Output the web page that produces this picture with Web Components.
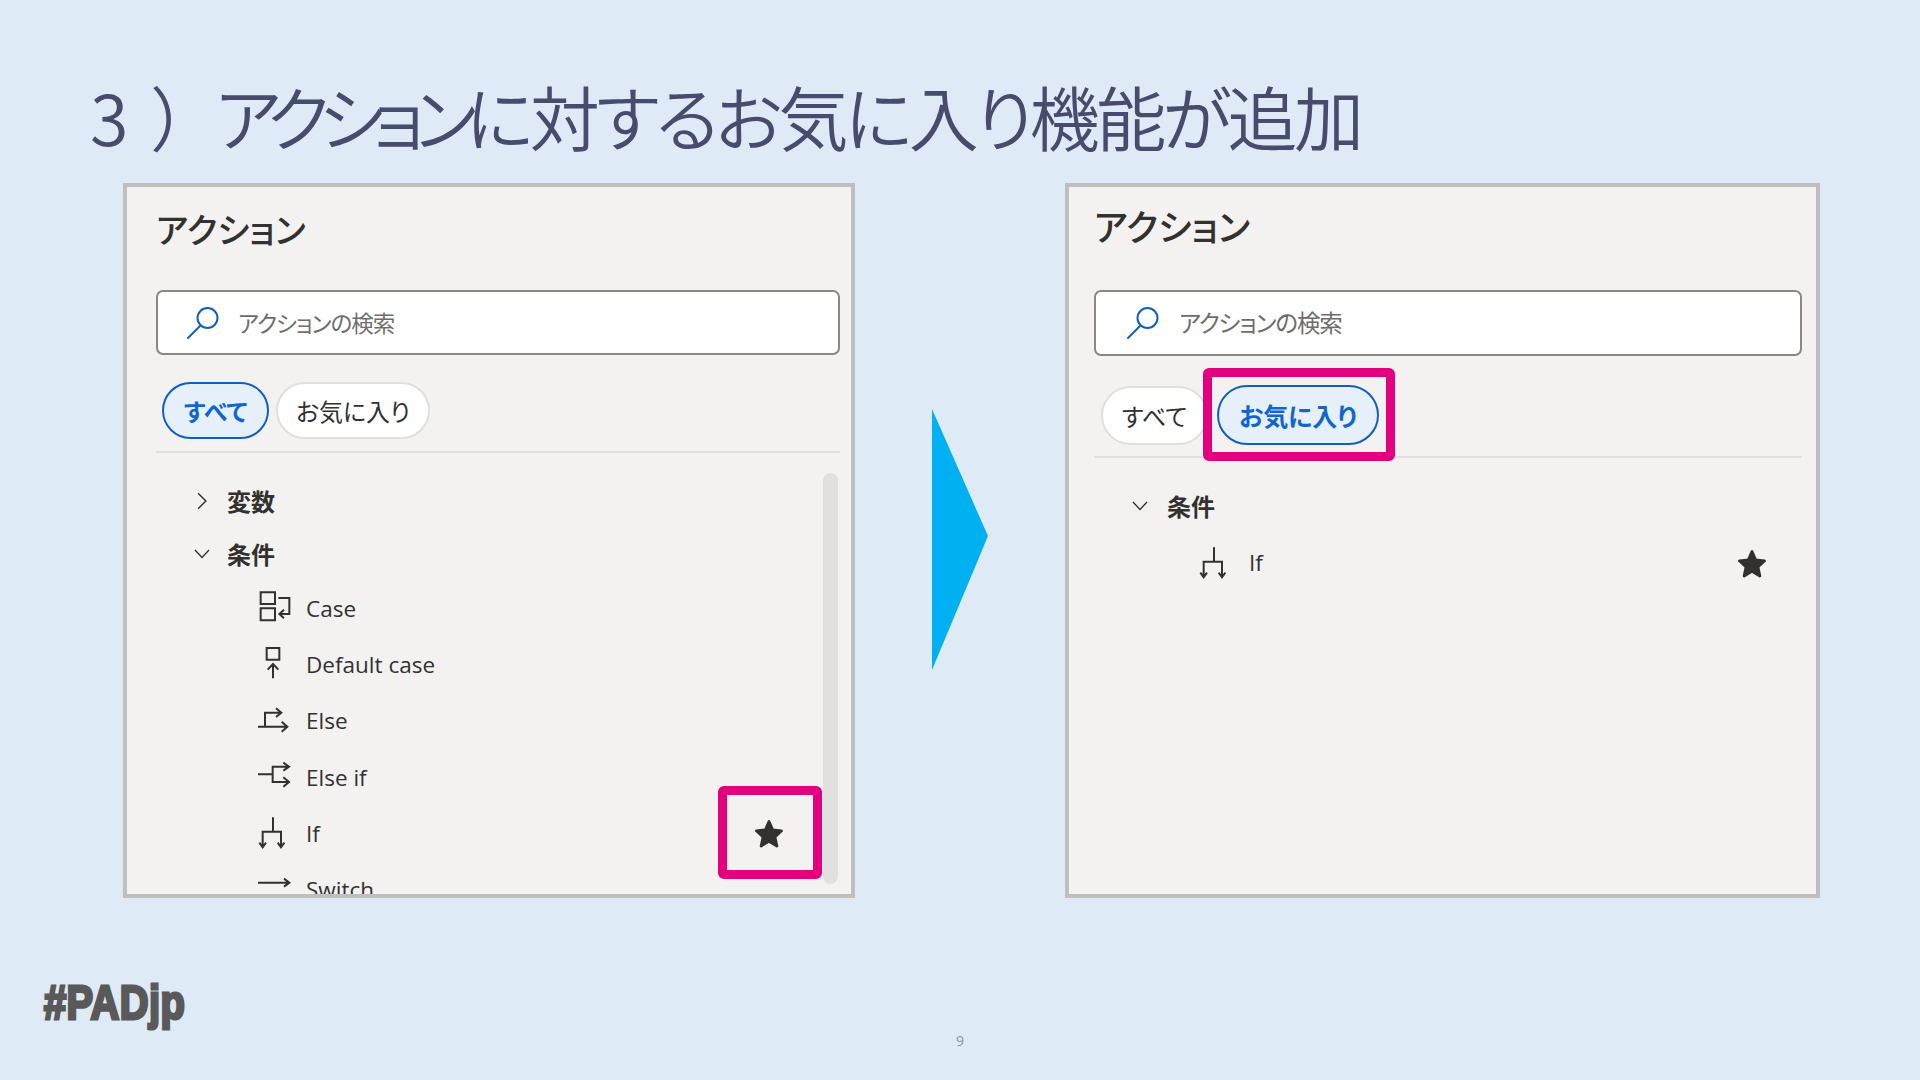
<!DOCTYPE html>
<html lang="ja"><head><meta charset="utf-8"><title>slide</title>
<style>
html,body{margin:0;padding:0;width:1920px;height:1080px;overflow:hidden;background:#deeaf6}
body{font-family:"Noto Sans CJK JP","Noto Sans",sans-serif;font-feature-settings:"palt";color:#323130}
</style></head><body>
<x-slide>
  <x-title slot="title"><span style="letter-spacing:24px">3</span><span style="letter-spacing:28px">）</span><span style="letter-spacing:-10.6px">アクション</span><span style="letter-spacing:-3.6px">に対するお気に入り機能が追加</span></x-title>
  <x-panel slot="left" style="width:732px;--pl:29px;--pr:11px;--title-size:34.5px;--title-top:19px;--search-h:65px;--pills-top:27px;--pills-pl:6px;--pills-gap:7px;--rule-top:12px;--star-scale:1.14">
    <span slot="title">アクション</span>
    <x-search slot="search" style="--icon-left:28px;--ph-left:18px;--ph-size:22.5px;--ph-ls:-1px">アクションの検索</x-search>
    <x-pill slot="pills" selected style="width:107px;height:57px">すべて</x-pill>
    <x-pill slot="pills" style="width:154px;height:57px">お気に入り</x-pill>
    <x-group name="変数"></x-group>
    <x-group name="条件" open>
      <x-item icon="case">Case</x-item>
      <x-item icon="default">Default case</x-item>
      <x-item icon="else">Else</x-item>
      <x-item icon="elseif">Else if</x-item>
      <x-item icon="if" style="--star-right:51px"><x-star slot="end"></x-star>If</x-item>
      <x-item icon="switch">Switch</x-item>
    </x-group>
    <x-scrollbar slot="over" style="left:696px;top:286px;width:15px;height:411px"></x-scrollbar>
    <x-highlight slot="over" style="left:591px;top:599px;width:104px;height:93px"></x-highlight>
  </x-panel>
  <x-arrow slot="arrow"></x-arrow>
  <x-panel slot="right" style="width:755px;--pl:25px;--pr:14px;--title-size:36px;--title-top:16px;--search-h:66px;--pills-top:29px;--pills-pl:7px;--pills-gap:10px;--rule-top:11px;--indent:3px;--label-shift:2px;--star-scale:1.14">
    <span slot="title">アクション</span>
    <x-search slot="search" style="--icon-left:30px;--ph-left:19px;--ph-size:23.5px;--ph-ls:-1.1px">アクションの検索</x-search>
    <x-pill slot="pills" style="width:107px;height:59px;margin-top:1px">すべて</x-pill>
    <x-pill slot="pills" selected style="width:162px;height:60px;font-size:25px;margin-left:-1px">お気に入り</x-pill>
    <x-group name="条件" open>
      <x-item icon="if" style="--star-right:30px;--pad-top:5px"><x-star slot="end"></x-star>If</x-item>
    </x-group>
    <x-highlight slot="over" style="left:134px;top:181px;width:192px;height:93px"></x-highlight>
  </x-panel>
  <x-tag slot="tag">#PADjp</x-tag>
  <span slot="page">9</span>
</x-slide>
<script>
function def(name,css,html){
  customElements.define(name,class extends HTMLElement{
    constructor(){super();this.attachShadow({mode:'open'}).innerHTML='<style>'+css+'</style>'+(typeof html==='function'?'':html)}
    connectedCallback(){if(typeof html==='function'&&!this._d){this._d=1;this.shadowRoot.innerHTML+=html(this)}}
  });
}
def('x-slide',`
:host{display:block;width:1920px;height:1080px;box-sizing:border-box;padding-top:76px}
.t{padding-left:90px;height:80px;margin-bottom:27px}
.row{display:flex;align-items:stretch;height:715px;padding-left:123px}
.arrow{display:flex;align-items:center;width:210px;justify-content:center}
.foot{display:grid;grid-template-columns:1fr auto 1fr;height:182px}
.tag{padding:81px 0 0 44px;overflow:visible}
.page{align-self:start;padding-top:135px;font:14px/16px "Noto Sans",sans-serif;color:#8f9aa8}
`,`<div class="t"><slot name="title"></slot></div>
<div class="row"><slot name="left"></slot><div class="arrow"><slot name="arrow"></slot></div><slot name="right"></slot></div>
<div class="foot"><div class="tag"><slot name="tag"></slot></div><div class="page"><slot name="page"></slot></div><div></div></div>`);
def('x-title',`:host{display:block;font:350 70px/80px "Noto Sans CJK JP",sans-serif;font-feature-settings:"palt";color:#474c6c;white-space:nowrap}`,`<slot></slot>`);
def('x-arrow',`:host{display:block;width:56px;height:261px;margin-top:-3px}svg{display:block}`,`<svg width="56" height="261" viewBox="0 0 56 261"><path d="M0 0L56 127L0 261Z" fill="#00b0f0"/></svg>`);
def('x-panel',`
:host{display:block;position:relative;box-sizing:border-box;height:715px;background:#f3f2f1;border:4px solid #bfbfbf;overflow:hidden;padding:var(--title-top,20px) var(--pr,11px) 0 var(--pl,29px);flex:none}
.title{font:500 var(--title-size,35px)/44px "Noto Sans CJK JP",sans-serif;font-feature-settings:"palt";color:#323130;height:44px;margin-bottom:calc(59px - var(--title-top,20px))}
.pills{display:flex;gap:var(--pills-gap,8px);padding-left:var(--pills-pl,6px);margin-top:var(--pills-top,28px);align-items:flex-start}
.rule{height:2px;background:#e1dfdd;margin-top:var(--rule-top,13px);margin-bottom:21px}
`,`<div class="title"><slot name="title"></slot></div><slot name="search"></slot>
<div class="pills"><slot name="pills"></slot></div><div class="rule"></div><slot></slot><slot name="over"></slot>`);
def('x-search',`
:host{display:flex;align-items:center;box-sizing:border-box;height:var(--search-h,64px);background:#fff;border:2px solid #8a8886;border-radius:7px;padding-left:var(--icon-left,28px);color:#6f6d6b;font:400 var(--ph-size,22.5px)/1 "Noto Sans CJK JP",sans-serif;font-feature-settings:"palt";letter-spacing:var(--ph-ls,-.5px)}
svg{flex:none;margin-right:var(--ph-left,20px)}`,
`<svg width="34" height="36" viewBox="0 0 34 36" fill="none" stroke="#1160c0" stroke-width="2" stroke-linecap="round"><circle cx="21.5" cy="13" r="10"/><path d="M14 21L2 33"/></svg><slot></slot>`);
def('x-pill',`
:host{display:flex;align-items:center;justify-content:center;box-sizing:border-box;border-radius:31px;background:#fff;border:2px solid #e1dfdd;color:#323130;font:400 24px/1 "Noto Sans CJK JP",sans-serif;font-feature-settings:"palt";flex:none}
:host([selected]){background:#e6f0fa;border-color:#0f5fc2;color:#1066cc;font-weight:700}`,`<slot></slot>`);
const chev={open:'M1 1L8 8.5L15 1',closed:'M1 1L8 8L1 15'};
def('x-group',`
:host{display:block}
:host([open]) .h{margin-bottom:1px}
.h{display:flex;align-items:center;height:53px;padding-left:36px;font:700 24px/1 "Noto Sans CJK JP",sans-serif;color:#323130}
.c{width:20px;height:18px;display:flex;align-items:center;justify-content:center;margin-right:calc(15px + var(--label-shift,0px))}
svg{display:block}`,
h=>{const o=h.hasAttribute('open');return `<div class="h"><div class="c">${o?
`<svg width="18" height="10" viewBox="0 0 16 10" fill="none" stroke="#323130" stroke-width="1.3"><path d="${chev.open}"/></svg>`:
`<svg width="10" height="18" viewBox="0 0 9 16" fill="none" stroke="#323130" stroke-width="1.3"><path d="${chev.closed}"/></svg>`}</div><span>${h.getAttribute('name')}</span></div><slot></slot>`});
const ic={
case:[30,'M92 40h43v35h-43zM92 88h43v36h-43zM145 57H178V105H150M162 92L148 105L162 118'],
default:[198,'M110 207h38v35h-38zM129 298V255M113 272L129 255L145 272'],
else:[366,'M84 440H170M155 425L172 440L155 455M105 440V398H152M138 385L154 398L138 411'],
elseif:[534,'M84 583H128M175 560H128V606H175M160 548L177 560L160 572M160 592L177 606L160 620'],
if:[702,'M129 712V755M98 800V755H153V800M88 788L98 802L108 788M143 788L153 802L163 788'],
switch:[870,'M84 905H176M162 893L178 905L162 917M84 958H176M100 943L84 958L100 973']
};
def('x-item',`
:host{display:flex;align-items:center;height:56.3px;box-sizing:border-box;padding-left:calc(100px + var(--indent,0px));padding-right:var(--star-right,0px);padding-top:var(--pad-top,0);font:400 22.5px/1 "Open Sans",sans-serif;color:#323130}
svg{flex:none;margin-right:calc(10px + var(--label-shift,0px))}
.e{margin-left:auto;display:flex}`,
h=>{const i=ic[h.getAttribute('icon')];return `<svg width="40" height="40" viewBox="78 ${i[0]} 120 120" fill="none" stroke="#323130" stroke-width="6"><path d="${i[1]}"/></svg><slot></slot><div class="e"><slot name="end"></slot></div>`});
def('x-star',`:host{display:block;width:40px;height:40px}svg{display:block;margin:auto}`,
`<svg width="40" height="40" viewBox="0 0 40 40"><path style="transform-origin:20px 20px;transform:scale(var(--star-scale,1))" d="M20 9L23.2 16.4L31 17.2L25.2 22.6L26.9 30.5L20 26.4L13.1 30.5L14.8 22.6L9 17.2L16.8 16.4Z" fill="#323130" stroke="#323130" stroke-width="2.5" stroke-linejoin="round"/></svg>`);
def('x-scrollbar',`:host{position:absolute;display:block;background:#e1e0df;border-radius:8px}`,``);
def('x-highlight',`:host{position:absolute;display:block;box-sizing:border-box;border:9px solid #e3007f;border-radius:6px}`,``);
def('x-tag',`:host{display:inline-block;font:700 48px/48px "Liberation Sans",sans-serif;color:#595959;-webkit-text-stroke:3px #595959;transform:scaleX(.83);transform-origin:0 50%;letter-spacing:.5px}`,`<slot></slot>`);
</script>
</body></html>
